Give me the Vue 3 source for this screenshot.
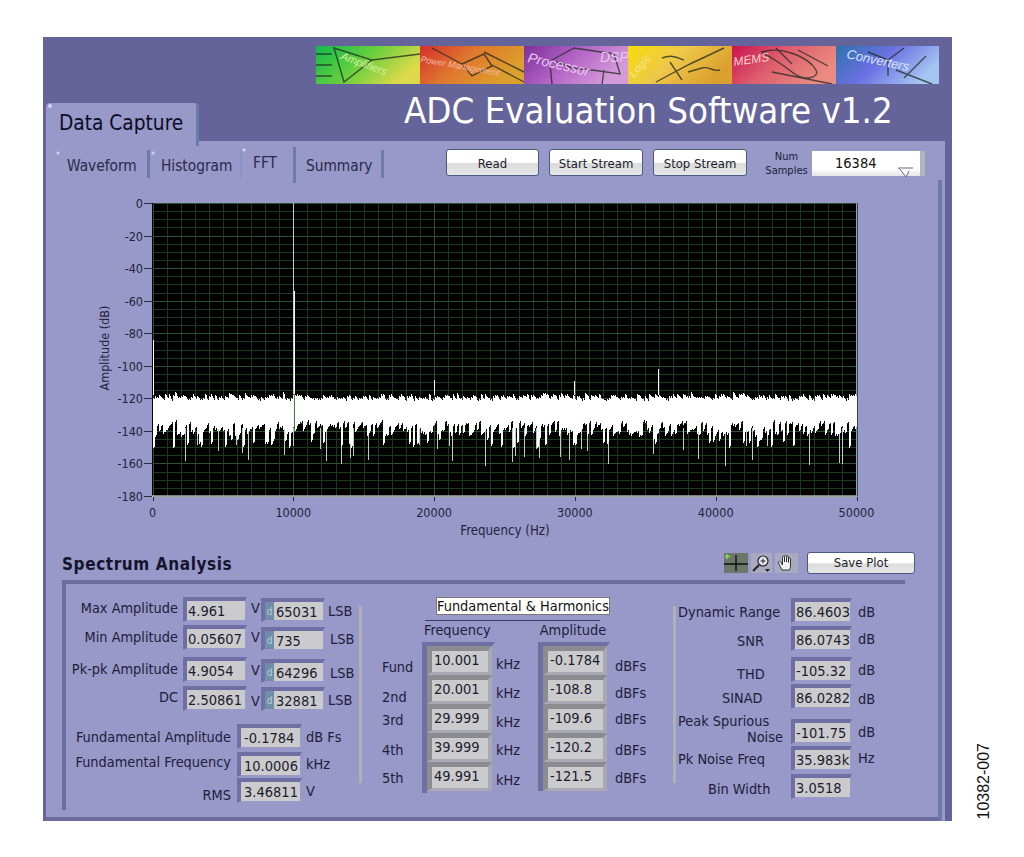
<script setup>
import { computed } from 'vue';

// small seeded random so the noise floor is the same on every load
let seed = 48271;
const rnd = () => {
  seed = (seed * 16807) % 2147483647;
  return seed / 2147483647;
};

const yOf = (db) => 203 + (-db / 180) * 293;
const xOf = (f) => 152.5 + (f / 50000) * 704;

const yTicks = [0, -20, -40, -60, -80, -100, -120, -140, -160, -180];
const xTicks = [0, 10000, 20000, 30000, 40000, 50000];

const gridMinor = computed(() => {
  let d = '';
  for (let db = 0; db >= -180; db -= 5) d += `M153 ${Math.round(yOf(db))}H856`;
  for (let f = 0; f <= 50000; f += 1000) d += `M${Math.round(xOf(f))} 203V496`;
  return d;
});
const gridMajor = computed(() => {
  let d = '';
  for (const db of yTicks) d += `M153 ${Math.round(yOf(db))}H856`;
  for (const f of xTicks) d += `M${Math.round(xOf(f))} 203V496`;
  return d;
});

// band of the noise floor, resampled every 2px so it clumps like the real trace
const noise = computed(() => {
  let d = '';
  for (let x = 153; x < 856; x += 2) {
    let top = -119 + (rnd() - 0.5) * 3.5;
    if (rnd() < 0.05) top = -116 - rnd() * 2;
    let bottom = -139 + (rnd() - 0.5) * 9;
    if (rnd() < 0.14) bottom = -145 - rnd() * 6;
    d += `M${x} ${Math.round(yOf(top))}V${Math.round(yOf(bottom))}`;
    d += `M${x + 1} ${Math.round(yOf(top - 0.8))}V${Math.round(yOf(bottom + 1))}`;
  }
  return d;
});

const deepSpikes = computed(() => {
  let d = '';
  for (let x = 155; x < 856; x += 3) {
    if (rnd() < 0.16) d += `M${x} ${Math.round(yOf(-138))}V${Math.round(yOf(-148 - rnd() * 14))}`;
  }
  return d;
});

const spurs = [
  { x: 153, top: -84 },
  { x: 294, top: -54 },
  { x: 434, top: -108.8 },
  { x: 574, top: -109.6 },
  { x: 658, top: -101.7 },
];

const subTabs = [
  { name: 'Waveform', cls: 'st-wave' },
  { name: 'Histogram', cls: 'st-hist' },
  { name: 'FFT', cls: 'st-fft' },
  { name: 'Summary', cls: 'st-sum' },
];

const bannerParts = [
  { c: ['#12b84c', '#62cf3e', '#dcd94a'], label: 'Amplifiers', fs: 11, tx: 24, ty: 13, rot: 20, art: 'M0 8H16M0 19H16M0 30H16M18 2L56 14L28 36ZM56 14L104 8', tc: '#d8f0a0' },
  { c: ['#d42f30', '#e0782e', '#dca02c'], label: 'Power Management', fs: 9, tx: 0, ty: 16, rot: 10, art: 'M12 2L42 18M42 18L64 8L72 20L52 30L42 18M70 18L104 36M64 6L104 26', tc: '#f4b8a0' },
  { c: ['#7c2f9c', '#b262c4', '#d49ada'], label: 'Processor', fs: 14, tx: 3, ty: 16, rot: 13, art: 'M28 14L50 2L90 8L96 28L68 24L48 22ZM80 24L78 38M26 18L28 38', tc: '#e8c8f0', extra: 'DSP', ex: 76, ey: 16 },
  { c: ['#f6dc0a', '#eec84a', '#dba02e'], label: 'Logic', fs: 11, tx: 6, ty: 32, rot: -48, art: 'M28 36L62 18L96 2M42 16L54 34M34 12C44 8 50 12 56 14M60 26L74 22C82 20 84 26 92 24', tc: '#f4e890' },
  { c: ['#c8124e', '#de5e6e', '#ea8a80'], label: 'MEMS', fs: 12, tx: 2, ty: 20, rot: -8, art: 'M30 6C48 0 76 10 84 24C88 32 72 36 60 26C50 18 40 12 30 6ZM44 2L60 18M66 4L96 20M40 26L100 38', tc: '#ffd0d0' },
  { c: ['#2e72ac', '#6a70e2', '#a4c4f2'], label: 'Converters', fs: 13, tx: 10, ty: 12, rot: 12, art: 'M32 6L52 14L68 2M52 14L52 30M68 32L90 10M60 24L96 38', tc: '#d8e4ff' },
];

const mt = (center, top) => `${center - 8 - top}px`;

const leftRows = [
  { label: 'Max Amplitude', y: 597, next: 625, ly: 608, val: '4.961', uy: 608, code: '65031', cy: 1, ry: 611, rx: 3 },
  { label: 'Min Amplitude', y: 625, next: 657, ly: 637, val: '0.05607', uy: 637, code: '735', cy: 2, ry: 639, rx: 5 },
  { label: 'Pk-pk Amplitude', y: 657, next: 686, ly: 669, val: '4.9054', uy: 670, code: '64296', cy: 2, ry: 673, rx: 5 },
  { label: 'DC', y: 686, next: 724, ly: 697, val: '2.50861', uy: 701, code: '32881', cy: 1, ry: 700, rx: 3 },
];

const lowerRows = [
  { label: 'Fundamental Amplitude', y: 724, next: 752, ly: 737, val: '-0.1784', unit: 'dB Fs', uy: 737 },
  { label: 'Fundamental Frequency', y: 752, next: 778, ly: 762, val: '10.0006', unit: 'kHz', uy: 764 },
  { label: 'RMS', y: 778, next: 804, ly: 795, val: '3.46811', unit: 'V', uy: 791 },
];

const harmonicLabels = [
  { t: 'Fund', y: 667 },
  { t: '2nd', y: 697 },
  { t: '3rd', y: 720 },
  { t: '4th', y: 750 },
  { t: '5th', y: 778 },
];
const freqs = ['10.001', '20.001', '29.999', '39.999', '49.991'];
const khzY = [664, 693, 722, 750, 780];
const amps = ['-0.1784', '-108.8', '-109.6', '-120.2', '-121.5'];
const dbfsY = [666, 693, 719, 750, 778];

const stack = (arr) => arr.map((y, i) => ({
  y,
  gap: `${i === 0 ? y - 8 - 642 : y - arr[i - 1] - 16}px`,
}));
const khzList = stack(khzY);
const dbfsList = stack(dbfsY);
const harmonicList = stack(harmonicLabels.map((l) => l.y)).map((r, i) => ({ ...r, t: harmonicLabels[i].t }));

const rightRows = [
  { y: 598, next: 626, val: '86.4603', unit: 'dB', uy: 612, lines: [{ t: 'Dynamic Range', x: 678, y: 612 }] },
  { y: 626, next: 657, val: '86.0743', unit: 'dB', uy: 639, lines: [{ t: 'SNR', x: 737, y: 641 }] },
  { y: 657, next: 684, val: '-105.32', unit: 'dB', uy: 670, lines: [{ t: 'THD', x: 737, y: 674 }] },
  { y: 684, next: 719, val: '86.0282', unit: 'dB', uy: 699, lines: [{ t: 'SINAD', x: 722, y: 698 }] },
  { y: 719, next: 746, val: '-101.75', unit: 'dB', uy: 732, lines: [{ t: 'Peak Spurious', x: 678, y: 721 }, { t: 'Noise', x: 747, y: 737 }] },
  { y: 746, next: 774, val: '35.983k', unit: 'Hz', uy: 758, lines: [{ t: 'Pk Noise Freq', x: 678, y: 759 }] },
  { y: 774, next: 802, val: '3.0518', unit: '', uy: 788, lines: [{ t: 'Bin Width', x: 708, y: 789 }] },
];

const lineStyle = (line, i, row) => {
  const prevBottom = i === 0 ? row.y : row.lines[i - 1].y + 8;
  return { marginTop: `${line.y - 8 - prevBottom}px`, marginLeft: `${line.x - 676}px` };
};
</script>

<template>
  <div class="page">
    <div class="frame">
      <div class="top">
        <div class="main-tab">Data Capture</div>
        <div class="top-right">
          <svg class="banner" width="623" height="38" viewBox="0 0 623 38">
            <defs>
              <linearGradient v-for="(p, i) in bannerParts" :id="'bn' + i" :key="'g' + i" x1="0" y1="0" x2="1" y2="0.4">
                <stop offset="0" :stop-color="p.c[0]" />
                <stop offset="0.5" :stop-color="p.c[1]" />
                <stop offset="1" :stop-color="p.c[2]" />
              </linearGradient>
            </defs>
            <g v-for="(p, i) in bannerParts" :key="p.label" :transform="`translate(${i * 104} 0)`">
              <rect width="104" height="38" :fill="`url(#bn${i})`" />
              <path :d="p.art" fill="none" stroke="#1f2a20" stroke-opacity="0.75" stroke-width="1.4" />
              <text class="banner-text" :font-size="p.fs" :x="p.tx" :y="p.ty" :fill="p.tc" :transform="`rotate(${p.rot} ${p.tx} ${p.ty})`">{{ p.label }}</text>
              <text v-if="p.extra" class="banner-text" :font-size="p.fs" :x="p.ex" :y="p.ey" :fill="p.tc">{{ p.extra }}</text>
            </g>
          </svg>
          <h1 class="title">ADC Evaluation Software v1.2</h1>
        </div>
      </div>

      <div class="panel">
        <div class="panel-main">
          <div class="toolbar">
            <div v-for="t in subTabs" :key="t.name" class="sub-tab" :class="t.cls">{{ t.name }}</div>
            <button class="btn btn-read">Read</button>
            <button class="btn btn-start">Start Stream</button>
            <button class="btn btn-stop">Stop Stream</button>
            <div class="num-label">Num<br />Samples</div>
            <div class="dropdown">
              <span>16384</span>
              <svg class="drop-arrow" width="16" height="11" viewBox="0 0 16 11">
                <path d="M0 1H15" fill="none" stroke="#667" stroke-width="1" />
                <path d="M1 1L8 10L11 4" fill="#fff" stroke="#667" stroke-width="1" />
              </svg>
            </div>
          </div>

          <svg class="plot" width="800" height="350" viewBox="90 190 800 350">
            <rect x="152" y="203" width="704" height="293" fill="#000" />
            <path :d="gridMinor" class="grid-minor" />
            <path :d="gridMajor" class="grid-major" />
            <path :d="deepSpikes" class="trace-dim" />
            <path :d="noise" class="trace" />
            <path v-for="s in spurs" :key="s.x" :d="`M${s.x} ${yOf(s.top)}V${yOf(-118)}`" class="trace" />
            <path d="M293 203V394" class="trace-dim" />
            <path d="M294 394V432" class="trace-green" />
            <path d="M152 496H856" stroke="#fff" />
            <g v-for="db in yTicks" :key="db">
              <path :d="`M144 ${Math.round(yOf(db))}H152`" class="tick" />
              <text class="axis" x="143" :y="yOf(db) + 5" text-anchor="end">{{ db }}</text>
            </g>
            <g v-for="f in xTicks" :key="f">
              <path :d="`M${Math.round(xOf(f))} 497V501`" class="tick" />
              <text class="axis" :x="xOf(f)" y="517" text-anchor="middle">{{ f }}</text>
            </g>
            <text class="axis axis-title" x="505" y="535" text-anchor="middle">Frequency (Hz)</text>
            <text class="axis" transform="translate(109 348) rotate(-90)" text-anchor="middle">Amplitude (dB)</text>
          </svg>

          <div class="spectrum-head">
            <div class="spectrum-title">Spectrum Analysis</div>
            <div class="tools">
              <svg width="24" height="20" viewBox="0 0 24 20">
                <rect width="24" height="20" fill="#6d7669" />
                <path d="M0 11H24M12 2V18" stroke="#111" stroke-width="1.4" fill="none" />
                <path d="M3 1V6M1 3.500H6" stroke="#7fe05a" stroke-width="1.4" />
              </svg>
              <svg width="21" height="20" viewBox="0 0 21 20">
                <rect width="21" height="20" fill="#a9a9c0" />
                <circle cx="12" cy="8" r="5" fill="#e8e8f0" stroke="#222" stroke-width="1.2" />
                <path d="M12 5.500V10.500M9.500 8H14.500" stroke="#222" stroke-width="1" />
                <path d="M8 12L2 18" stroke="#222" stroke-width="2" />
                <path d="M14 16H19L16.500 19Z" fill="#222" />
              </svg>
              <svg width="23" height="20" viewBox="0 0 23 20">
                <rect width="23" height="20" fill="#a9a9c0" />
                <path d="M7 17L3.500 10C3 8.500 5 8 6 9.500L7.500 12V4.500C7.500 3 9.500 3 9.500 4.500V9V3.500C9.500 2 11.500 2 11.500 3.500V9V4C11.500 2.800 13.500 2.800 13.500 4V9.500V6C13.500 4.800 15.500 4.800 15.500 6V13C15.500 15 14.500 16 14.500 17Z" fill="#f2f2f6" stroke="#222" stroke-width="0.9" />
              </svg>
            </div>
            <button class="btn btn-save">Save Plot</button>
          </div>

          <div class="group">
            <div class="col-left">
              <div v-for="r in leftRows" :key="r.label" class="row" :style="{ height: r.next - r.y + 'px' }">
                <span class="lbl lbl-a" :style="{ marginTop: mt(r.ly, r.y) }">{{ r.label }}</span>
                <div class="val val-a">{{ r.val }}</div>
                <span class="unit unit-v" :style="{ marginTop: mt(r.uy, r.y) }">V</span>
                <div class="val val-code" :style="{ marginTop: r.cy + 'px' }"><i class="radix">d</i>{{ r.code }}</div>
                <span class="unit" :style="{ marginTop: mt(r.ry, r.y), marginLeft: r.rx + 'px' }">LSB</span>
              </div>
              <div v-for="r in lowerRows" :key="r.label" class="row" :style="{ height: r.next - r.y + 'px' }">
                <span class="lbl lbl-b" :style="{ marginTop: mt(r.ly, r.y) }">{{ r.label }}</span>
                <div class="val val-b">{{ r.val }}</div>
                <span class="unit unit-low" :style="{ marginTop: mt(r.uy, r.y) }">{{ r.unit }}</span>
              </div>
            </div>

            <div class="sep"></div>

            <div class="col-mid">
              <div class="fh-title">Fundamental &amp; Harmonics</div>
              <div class="fh-line"></div>
              <div class="fh-heads">
                <span class="head-freq">Frequency</span>
                <span class="head-amp">Amplitude</span>
              </div>
              <div class="fh-body">
                <div class="fh-labels">
                  <span v-for="l in harmonicList" :key="l.t" :style="{ marginTop: l.gap }">{{ l.t }}</span>
                </div>
                <div class="cluster cluster-f">
                  <div v-for="f in freqs" :key="f" class="cell">{{ f }}</div>
                </div>
                <div class="fh-units fh-khz">
                  <span v-for="k in khzList" :key="k.y" :style="{ marginTop: k.gap }">kHz</span>
                </div>
                <div class="cluster cluster-a">
                  <div v-for="a in amps" :key="a" class="cell">{{ a }}</div>
                </div>
                <div class="fh-units fh-dbfs">
                  <span v-for="k in dbfsList" :key="k.y" :style="{ marginTop: k.gap }">dBFs</span>
                </div>
              </div>
            </div>

            <div class="sep"></div>

            <div class="col-right">
              <div v-for="r in rightRows" :key="r.val" class="row" :style="{ height: r.next - r.y + 'px' }">
                <div class="lbl-lines">
                  <span v-for="(l, i) in r.lines" :key="l.t" :style="lineStyle(l, i, r)">{{ l.t }}</span>
                </div>
                <div class="val val-r">{{ r.val }}</div>
                <span class="unit unit-r" :style="{ marginTop: mt(r.uy, r.y) }">{{ r.unit }}</span>
              </div>
            </div>
          </div>
        </div>
        <div class="panel-edge"></div>
      </div>
    </div>
    <div class="fig-id">10382-007</div>
  </div>
</template>

<style>
html, body { margin: 0; background: #fff; }
</style>

<style scoped>
.page {
  width: 1024px;
  height: 857px;
  box-sizing: border-box;
  padding: 37px 0 0 43px;
  display: flex;
  align-items: flex-start;
  background: #fff;
  color: #20203a;
  font-family: "DejaVu Sans Condensed", "Noto Sans", sans-serif;
  overflow: hidden;
}

.frame {
  width: 909px;
  height: 784px;
  flex: none;
  background: #65649a;
}

.top {
  display: flex;
  height: 104px;
  padding-left: 3px;
}

.main-tab {
  position: relative;
  z-index: 1;
  width: 153px;
  height: 43px;
  margin-top: 66px;
  padding-left: 13px;
  box-sizing: border-box;
  border-right: 3px solid #6f7aa8;
  border-radius: 4px 4px 0 0;
  background: radial-gradient(circle at 4px 3px, #c8d4f0 1.5px, transparent 2.5px), #9898c9;
  color: #0c0c24;
  font-size: 20.7px;
  line-height: 40px;
}

.top-right {
  display: flex;
  flex-direction: column;
  margin-left: 117px;
}

.banner {
  display: block;
  margin-top: 9px;
  flex: none;
}

.banner-text {
  font-family: "Liberation Sans", sans-serif;
  font-style: italic;
}

.title {
  margin: 7px 0 0;
  padding-left: 88px;
  color: #fff;
  font-size: 36.3px;
  font-weight: 400;
  line-height: 40px;
  white-space: nowrap;
}

.panel {
  display: flex;
  width: 899px;
  height: 680px;
  margin-left: 3px;
  background: #9898c9;
}

.panel-main {
  width: 892px;
  height: 680px;
  box-sizing: border-box;
  border-bottom: 4px solid #6c6c9e;
}

.panel-edge {
  width: 4px;
  margin-top: 39px;
  background: #6f7aa8;
}

.toolbar {
  display: flex;
  align-items: flex-start;
  height: 49px;
  box-sizing: border-box;
  padding: 9px 0 0 6px;
  font-size: 15.3px;
}

.sub-tab {
  height: 28px;
  box-sizing: border-box;
  line-height: 32px;
  color: #2a2a48;
  border-right: 3px solid #6f7aa8;
}
.st-wave { width: 98px; padding-left: 15px; background: radial-gradient(circle at 6px 3px, #c8d4f0 1px, transparent 2px); }
.st-hist { width: 92px; padding-left: 11px; border-right: 2px solid #8a94c0; background: radial-gradient(circle at 3px 3px, #c8d4f0 1px, transparent 2px); }
.st-fft { width: 54px; height: 36px; margin-top: -3px; padding-left: 11px; line-height: 32px; background: radial-gradient(circle at 2px 3px, #c8d4f0 1px, transparent 2px); }
.st-sum { width: 88px; padding-left: 10px; }

.btn {
  box-sizing: border-box;
  height: 27px;
  padding: 0 0 0 0;
  border: 1px solid #4a5a80;
  border-radius: 3px;
  background: linear-gradient(#fff 0, #fff 50%, #dcdcdc 54%, #e6e6e6 100%);
  color: #1c1c2c;
  font-family: inherit;
  font-size: 13px;
  line-height: 27px;
}
.btn-read { width: 93px; margin: -1px 0 0 62px; }
.btn-start { width: 94px; margin: -1px 0 0 10px; }
.btn-stop { width: 94px; margin: -1px 0 0 10px; }

.num-label {
  width: 65px;
  box-sizing: border-box;
  padding-left: 14px;
  text-align: center;
  font-size: 11px;
  line-height: 14px;
  color: #20203a;
  white-space: nowrap;
}

.dropdown {
  position: relative;
  width: 113px;
  height: 25px;
  margin-top: 1px;
  box-sizing: border-box;
  padding-left: 23px;
  border-right: 5px solid #b4b4c0;
  background: linear-gradient(#fff 70%, #e4e4e4);
  font-size: 14.5px;
  line-height: 24px;
  color: #111;
}

.drop-arrow {
  position: absolute;
  right: 6px;
  bottom: -2px;
}

.plot {
  display: block;
  margin-left: 44px;
}
.grid-minor { stroke: #1c3a1e; stroke-width: 1; fill: none; shape-rendering: crispEdges; }
.grid-major { stroke: #2a5230; stroke-width: 1; fill: none; shape-rendering: crispEdges; }
.trace { stroke: #fff; stroke-width: 1; fill: none; shape-rendering: crispEdges; }
.trace-dim { stroke: #c8c8c8; stroke-width: 1; fill: none; shape-rendering: crispEdges; }
.trace-green { stroke: #3e7a3e; stroke-width: 1; shape-rendering: crispEdges; }
.tick { stroke: #2a2a40; stroke-width: 1; shape-rendering: crispEdges; }
.axis { font-size: 12.5px; fill: #24243c; }
.axis-title { font-size: 13.2px; }

.spectrum-head {
  display: flex;
  align-items: flex-start;
  height: 40px;
  box-sizing: border-box;
  padding: 12px 23px 0 16px;
}

.spectrum-title {
  color: #14142c;
  font-size: 17px;
  font-weight: 700;
  letter-spacing: 0.6px;
  line-height: 24px;
}

.tools {
  display: flex;
  gap: 3px;
  margin-left: auto;
  margin-top: 1px;
}

.btn-save {
  width: 108px;
  height: 22px;
  margin-left: 9px;
  font-size: 13px;
  line-height: 20px;
}

.group {
  display: flex;
  width: 843px;
  height: 230px;
  margin-left: 16px;
  box-sizing: border-box;
  border-top: 4px solid #6c6c9e;
  border-left: 4px solid #6c6c9e;
}

.col-left { width: 293px; padding-top: 13px; }
.col-mid { width: 311px; }
.col-right { padding-top: 14px; }

.sep {
  width: 3px;
  height: 177px;
  margin-top: 22px;
  background: #b0b0b8;
}

.row {
  display: flex;
  align-items: flex-start;
  font-size: 14.4px;
  line-height: 16px;
  white-space: nowrap;
}

.lbl { flex: none; text-align: right; box-sizing: border-box; }
.lbl-a { width: 117px; padding-right: 5px; }
.lbl-b { width: 171px; padding-right: 6px; }

.val {
  flex: none;
  box-sizing: border-box;
  height: 25px;
  overflow: hidden;
  padding-left: 1px;
  border-style: solid;
  border-width: 4px 2px 2px 4px;
  border-color: #6f6fa3 #9a9aca #9a9aca #6f6fa3;
  background: #cbcbce;
  color: #1c1c2c;
  font-size: 14.5px;
  line-height: 20px;
  white-space: nowrap;
}
.val-a { width: 64px; }
.val-b { width: 65px; padding-left: 3px; }
.val-r { width: 61px; margin-right: 1px; }

.val-code {
  display: flex;
  width: 64px;
  height: 24px;
  padding-left: 0;
}

.radix {
  width: 9px;
  margin-right: 2px;
  flex: none;
  background: #6f8fa8;
  color: #b8d0d8;
  font-size: 10px;
  font-style: normal;
  text-align: center;
}

.unit { flex: none; }
.unit-v { width: 14px; padding-left: 4px; box-sizing: border-box; }
.unit-low { margin-left: 4px; }
.unit-r { margin-left: 5px; }

.lbl-lines {
  display: flex;
  flex-direction: column;
  flex: none;
  width: 115px;
}

.fh-title {
  width: 174px;
  height: 18px;
  margin: 13px 0 0 74px;
  box-sizing: border-box;
  border: 1px solid #777;
  background: #fff;
  color: #111;
  font-size: 14.4px;
  line-height: 16px;
  text-align: center;
  white-space: nowrap;
}

.fh-line {
  width: 175px;
  height: 1px;
  margin: 5px 0 0 63px;
  background: #3a3a6a;
}

.fh-heads {
  display: flex;
  height: 21px;
  font-size: 14.4px;
  line-height: 18px;
}
.head-freq { margin-left: 62px; }
.head-amp { margin-left: 49px; }

.fh-body {
  display: flex;
  align-items: flex-start;
  padding-left: 20px;
  font-size: 14.4px;
  line-height: 16px;
}

.fh-labels { display: flex; flex-direction: column; width: 40px; }
.fh-units { display: flex; flex-direction: column; }
.fh-khz { width: 43px; padding-left: 1px; box-sizing: border-box; }
.fh-dbfs { padding-left: 5px; }

.cluster {
  box-sizing: border-box;
  border-style: solid;
  border-width: 4px 3px 0 5px;
  border-color: #6f6fa3 transparent transparent #6f6fa3;
}
.cluster-f { width: 73px; height: 151px; }
.cluster-a { width: 72px; height: 149px; }

.cell {
  box-sizing: border-box;
  height: 29px;
  padding-left: 2px;
  border-style: solid;
  border-width: 5px 4px 3px 5px;
  border-color: #8c8c90 #a9a9b4 #a9a9b4 #8c8c90;
  background: #cbcbce;
  color: #1c1c2c;
  font-size: 14.5px;
  line-height: 19px;
}

.fig-id {
  align-self: flex-end;
  margin: 0 0 37px 25px;
  writing-mode: vertical-rl;
  transform: rotate(180deg);
  color: #111;
  font-family: "Liberation Sans", sans-serif;
  font-size: 16px;
  line-height: 14px;
}
</style>
